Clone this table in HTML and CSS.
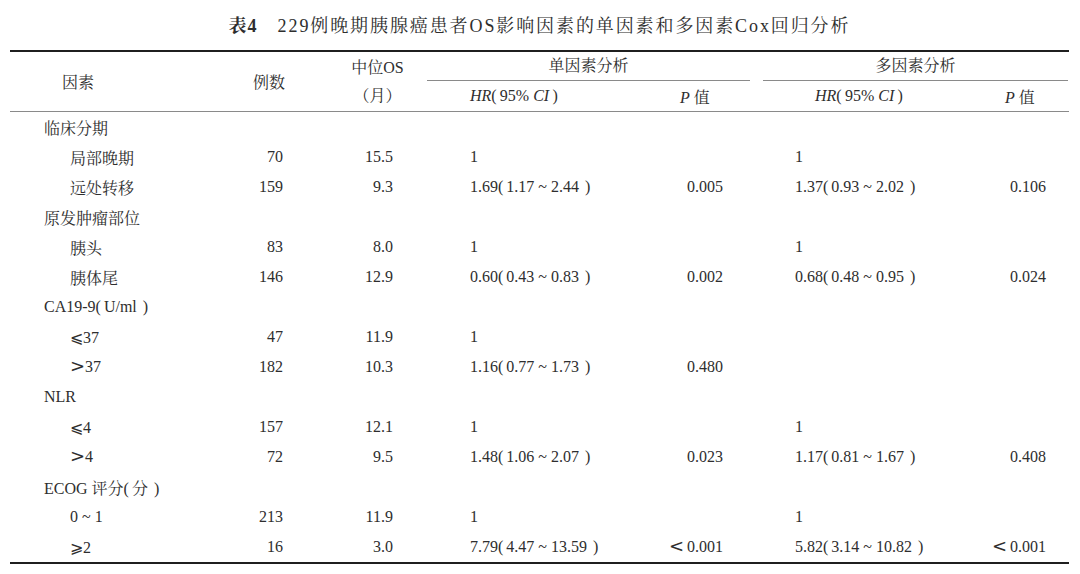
FILE: index.html
```html
<!DOCTYPE html>
<html lang="zh">
<head>
<meta charset="utf-8">
<link rel="stylesheet" href="styles.css">
</head>
<body>
<div class="page">
  <div class="title"><b class="tno">表4</b><span class="ttext">229例晚期胰腺癌患者OS影响因素的单因素和多因素Cox回归分析</span></div>
  <table class="tbl">
    <colgroup>
      <col class="c1"><col class="c2"><col class="c3"><col class="c4"><col class="c5"><col class="c6"><col class="c7">
    </colgroup>
    <thead>
      <tr class="h1">
        <th rowspan="2" class="hf">因素</th>
        <th rowspan="2" class="hn">例数</th>
        <th rowspan="2" class="hos"><div>中位OS</div><div class="mon">（月）</div></th>
        <th colspan="2" class="hg"><div class="grp g1">单因素分析</div></th>
        <th colspan="2" class="hg"><div class="grp g2">多因素分析</div></th>
      </tr>
      <tr class="h2">
        <th class="hhr1"><i>HR</i>(&thinsp;95% <i>CI</i>&thinsp;)</th>
        <th class="hp1"><i>P</i> 值</th>
        <th class="hhr2"><i>HR</i>(&thinsp;95% <i>CI</i>&thinsp;)</th>
        <th class="hp2"><i>P</i> 值</th>
      </tr>
    </thead>
    <tbody>
      <tr><td class="grpl">临床分期</td><td></td><td></td><td></td><td></td><td></td><td></td></tr>
      <tr><td class="sub">局部晚期</td><td class="n">70</td><td class="os">15.5</td><td class="hr">1</td><td class="p1"></td><td class="hr2">1</td><td class="p2"></td></tr>
      <tr><td class="sub">远处转移</td><td class="n">159</td><td class="os">9.3</td><td class="hr">1.69(<span class="ci">1.17 ~ 2.44</span>)</td><td class="p1">0.005</td><td class="hr2">1.37(<span class="ci">0.93 ~ 2.02</span>)</td><td class="p2">0.106</td></tr>
      <tr><td class="grpl">原发肿瘤部位</td><td></td><td></td><td></td><td></td><td></td><td></td></tr>
      <tr><td class="sub">胰头</td><td class="n">83</td><td class="os">8.0</td><td class="hr">1</td><td class="p1"></td><td class="hr2">1</td><td class="p2"></td></tr>
      <tr><td class="sub">胰体尾</td><td class="n">146</td><td class="os">12.9</td><td class="hr">0.60(<span class="ci">0.43 ~ 0.83</span>)</td><td class="p1">0.002</td><td class="hr2">0.68(<span class="ci">0.48 ~ 0.95</span>)</td><td class="p2">0.024</td></tr>
      <tr><td class="grpl">CA19-9(<span class="ci">U/ml</span>)</td><td></td><td></td><td></td><td></td><td></td><td></td></tr>
      <tr><td class="sub">⩽37</td><td class="n">47</td><td class="os">11.9</td><td class="hr">1</td><td class="p1"></td><td class="hr2"></td><td class="p2"></td></tr>
      <tr><td class="sub"><span class="gt">&gt;</span>37</td><td class="n">182</td><td class="os">10.3</td><td class="hr">1.16(<span class="ci">0.77 ~ 1.73</span>)</td><td class="p1">0.480</td><td class="hr2"></td><td class="p2"></td></tr>
      <tr><td class="grpl">NLR</td><td></td><td></td><td></td><td></td><td></td><td></td></tr>
      <tr><td class="sub">⩽4</td><td class="n">157</td><td class="os">12.1</td><td class="hr">1</td><td class="p1"></td><td class="hr2">1</td><td class="p2"></td></tr>
      <tr><td class="sub"><span class="gt">&gt;</span>4</td><td class="n">72</td><td class="os">9.5</td><td class="hr">1.48(<span class="ci">1.06 ~ 2.07</span>)</td><td class="p1">0.023</td><td class="hr2">1.17(<span class="ci">0.81 ~ 1.67</span>)</td><td class="p2">0.408</td></tr>
      <tr><td class="grpl">ECOG 评分(<span class="ci">分</span>)</td><td></td><td></td><td></td><td></td><td></td><td></td></tr>
      <tr><td class="sub">0 ~ 1</td><td class="n">213</td><td class="os">11.9</td><td class="hr">1</td><td class="p1"></td><td class="hr2">1</td><td class="p2"></td></tr>
      <tr class="last"><td class="sub">⩾2</td><td class="n">16</td><td class="os">3.0</td><td class="hr">7.79(<span class="ci">4.47 ~ 13.59</span>)</td><td class="p1"><span class="lt">&lt;</span>0.001</td><td class="hr2">5.82(<span class="ci">3.14 ~ 10.82</span>)</td><td class="p2"><span class="lt">&lt;</span>0.001</td></tr>
    </tbody>
  </table>
</div>
</body>
</html>
```
FILE: styles.css
```css
html, body {
  margin: 0;
  padding: 0;
  background: #ffffff;
}
body {
  font-family: "Liberation Serif", "Noto Serif CJK SC", "Noto Sans CJK SC", serif;
  color: #2e2e2e;
  font-size: 16px;
}
.page {
  width: 1080px;
  height: 574px;
  padding: 0 11px 0 10px;
  box-sizing: border-box;
}
.title {
  height: 50px;
  display: flex;
  align-items: center;
  justify-content: center;
  font-size: 18px;
  padding-bottom: 3px;
  box-sizing: border-box;
}
.tno {
  font-weight: bold;
  margin-right: 20px;
  letter-spacing: 1px;
}
.ttext {
  letter-spacing: 1.9px;
}
.tbl {
  width: 1059px;
  border-collapse: collapse;
  table-layout: fixed;
  border-top: 2px solid #1f1f1f;
  border-bottom: 2px solid #1f1f1f;
}
.c1 { width: 220px; }
.c2 { width: 70px; }
.c3 { width: 127px; }
.c4 { width: 213px; }
.c5 { width: 117px; }
.c6 { width: 203px; }
.c7 { width: 109px; }
th {
  font-weight: normal;
  padding: 0;
}
thead .h1 th { height: 29px; }
thead .h2 th {
  height: 30px;
  border-bottom: 1px solid #8a8a8a;
}
thead th[rowspan] { border-bottom: 1px solid #8a8a8a; }
.hf { text-align: left; padding-left: 52px; }
.hn { text-align: right; padding-right: 15px; }
.hos { text-align: center; padding-left: 28px; line-height: 28px; }
.hg { vertical-align: bottom; }
.grp {
  border-bottom: 1px solid #8a8a8a;
  height: 28px;
  line-height: 27px;
  text-align: center;
}
.g1 { margin-right: 7px; }
.g2 { margin-left: 6px; margin-right: 1px; }
.hhr1 { text-align: left; padding-left: 43px; }
.hp1 { text-align: left; padding-left: 40px; }
.hhr2 { text-align: left; padding-left: 58px; }
.hp2 { text-align: left; padding-left: 45px; }
i { font-style: italic; }
td {
  height: 30px;
  padding: 0;
  white-space: nowrap;
  vertical-align: middle;
}
.ci {
  margin: 0 6px 0 3px;
}
.gt, .lt {
  font-family: "DejaVu Sans", sans-serif;
  font-size: 18px;
  line-height: 16px;
}
.gt { margin-right: 0; }
.lt { margin-right: 3px; }
.grpl { padding-left: 34px; }
.sub { padding-left: 60px; }
.n { text-align: right; padding-right: 17px; }
.os { text-align: right; padding-right: 34px; }
.hr { padding-left: 43px; }
.p1 { text-align: right; padding-right: 34px; }
.hr2 { padding-left: 38px; }
.p2 { text-align: right; padding-right: 23px; }
```
